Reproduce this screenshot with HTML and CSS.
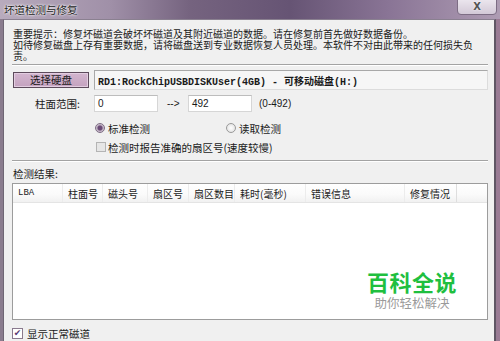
FILE: index.html
```html
<!DOCTYPE html>
<html lang="zh-CN">
<head>
  <meta charset="UTF-8" />
  <title>坏道检测与修复</title>
  <link rel="stylesheet" href="styles.css">
</head>
<body>
<div class="window">
  <div class="titlebar">
    <span class="title">坏道检测与修复</span>
    <span class="close">X</span>
  </div>
  <div class="client">
    <p class="notice">重要提示：修复坏磁道会破坏坏磁道及其附近磁道的数据。请在修复前首先做好数据备份。<br>如待修复磁盘上存有重要数据，请将磁盘送到专业数据恢复人员处理。本软件不对由此带来的任何损失负<br>责。</p>
    <div class="sep"></div>

    <div class="row disk-row">
      <button class="btn">选择硬盘</button>
      <div class="disk-field">RD1:RockChipUSBDISKUser(4GB) - 可移动磁盘(H:)</div>
    </div>

    <div class="row range-row">
      <span class="range-label">柱面范围:</span>
      <div class="input">0</div>
      <span class="arrow">--&gt;</span>
      <div class="input">492</div>
      <span class="hint">(0-492)</span>
    </div>

    <div class="row opt-row">
      <span class="opt opt-first"><span class="radio on"></span>标准检测</span>
      <span class="opt"><span class="radio"></span>读取检测</span>
    </div>

    <div class="row opt-row opt-check">
      <span class="opt"><span class="check disabled"></span>检测时报告准确的扇区号(速度较慢)</span>
    </div>

    <div class="sep sep-2"></div>

    <div class="row result-label">检测结果:</div>

    <div class="list">
      <div class="list-head">
        <span class="col c-lba">LBA</span>
        <span class="col c-cyl">柱面号</span>
        <span class="col c-head">磁头号</span>
        <span class="col c-sec">扇区号</span>
        <span class="col c-cnt">扇区数目</span>
        <span class="col c-time">耗时(毫秒)</span>
        <span class="col c-err">错误信息</span>
        <span class="col c-fix">修复情况</span>
      </div>
      <div class="watermark">
        <span class="wm-main">百科全说</span>
        <span class="wm-sub">助你轻松解决</span>
      </div>
    </div>

    <div class="row bottom-row">
      <span class="check on">&#10004;</span>显示正常磁道
    </div>
  </div>
</div>
</body>
</html>
```

FILE: styles.css
```css
/* Reset & frame */
* { margin: 0; padding: 0; box-sizing: border-box; }
html, body {
  width: 500px; height: 341px; overflow: hidden;
  background: linear-gradient(to right, #8a7c8e 0%, #8a7c8e 90%, #9a7b94 100%);
  font-family: "Noto Sans CJK SC", "Noto Sans", sans-serif;
  font-size: 10px; color: #1a1a1a;
}
.window { display: flex; flex-direction: column; height: 341px; }

/* Title bar */
.titlebar {
  height: 19px; display: flex; justify-content: space-between; align-items: center;
  padding-left: 4px;
  background: linear-gradient(to right, #b8abbd 0%, #a090a8 22%, #75637f 38%, #665474 58%, #8a7596 78%, #ae9cb3 100%);
}
.title {
  font-size: 10.5px; line-height: 12px; color: #222;
  text-shadow: 0 0 3px #fff, 0 0 2px #fff;
}
.close {
  align-self: flex-start; margin-top: -3px; margin-right: 3px;
  width: 40px; height: 18px; display: flex; align-items: center; justify-content: center;
  background: linear-gradient(#eee9f0, #d3c9d7);
  border: 1px solid #7d6d84; border-radius: 0 0 4px 4px;
  font-family: "DejaVu Sans", sans-serif; font-weight: 700; font-size: 10px; line-height: 11px; color: #555;
  text-shadow: 0 0 2px #fff;
}

/* Client area */
.client {
  position: relative;
  margin-left: 3px; width: 493px; height: 322px;
  border-left: 1px solid #6f6674; border-top: 1px solid #8a8090; border-right: 2px solid #5f5664;
  background: #f0f0f0;
  padding: 8px 6px 0 8px;
  overflow: hidden;
}
.notice { margin-left: 1px; line-height: 11px; white-space: nowrap; }
.sep { margin-top: 3px; border-top: 1px solid #a3a3a3; border-bottom: 1px solid #fff; }
.sep-2 { margin-top: 6px; }
.row { display: flex; align-items: center; white-space: nowrap; }

/* Disk selection */
.disk-row { margin-top: 4px; height: 20px; gap: 5px; }
.btn {
  margin-left: 1px; width: 76px; height: 16px;
  background: linear-gradient(#d3b6cf, #c4a2bf);
  border: 1px solid #5d4b5c; box-shadow: inset 0 0 0 1px #e2cde0;
  font-family: inherit; font-size: 10.5px; line-height: 14px; color: #1a1a1a;
}
.disk-field {
  width: 394px; height: 20px; padding-left: 3px;
  display: flex; align-items: center;
  background: #f6f6f6; border: 1px solid #a8a8a8; border-bottom-color: #dcdcdc; border-right-color: #dcdcdc;
  font-family: "Liberation Mono", "Noto Sans CJK SC", monospace; font-weight: 700; font-size: 10px;
}

/* Cylinder range */
.range-row { margin-top: 5px; height: 17px; }
.range-label { width: 82px; padding-right: 14px; text-align: right; font-size: 10.5px; }
.input {
  width: 64px; height: 17px; padding-left: 3px;
  display: flex; align-items: center;
  background: #fff; border: 1px solid #d6d6d6; border-top-color: #bdbdbd;
  font-family: "Liberation Sans", sans-serif; font-size: 10px;
}
.arrow { width: 30px; padding-left: 9px; font-family: "Liberation Sans", sans-serif; font-size: 10px; }
.hint { margin-left: 7px; font-family: "Liberation Sans", sans-serif; font-size: 10px; }

/* Options */
.opt-row { margin-top: 9px; height: 14px; padding-left: 83px; font-size: 10.5px; }
.opt-check { margin-top: 5px; padding-left: 84px; }
.opt { display: flex; align-items: center; gap: 3px; }
.opt-first { width: 131px; }
.opt-check .opt { gap: 2px; }
.radio {
  width: 10px; height: 10px; border-radius: 50%;
  border: 1px solid #9a9a9a; background: radial-gradient(#ffffff, #dcdcdc);
}
.radio.on { background: radial-gradient(circle, #6a4a76 0, #6a4a76 2px, #b8a8bc 3px, #e6e0e8 5px); border-color: #7d6d84; }
.check {
  width: 10px; height: 10px; border: 1px solid #b4b4b4;
  display: flex; align-items: center; justify-content: center;
}
.check.disabled { background: #e6e6e6; }
.check.on {
  width: 11px; height: 11px; background: #fff; border-color: #8a7a8e;
  color: #5a3a74; font-family: "DejaVu Sans", sans-serif; font-size: 9px; line-height: 9px;
}

/* Results */
.result-label { margin-top: 4px; height: 14px; margin-left: 1px; font-size: 10.5px; }
.list {
  position: relative;
  margin-top: 3px; height: 137px;
  background: #fff; border: 1px solid #9c9c9c;
}
.list-head {
  display: flex; height: 19px;
  background: linear-gradient(#ffffff, #fafafa 60%, #f1f1f1);
  border-bottom: 1px solid #e4e4e4;
}
.col {
  display: flex; align-items: center; padding-left: 5px; white-space: nowrap; overflow: hidden;
  border-right: 1px solid #ececec; font-size: 10px; color: #222;
}
.c-lba { width: 50px; font-family: "Liberation Mono", monospace; font-size: 9px; }
.c-cyl { width: 40px; }
.c-head { width: 45px; }
.c-sec { width: 41px; }
.c-cnt { width: 46px; }
.c-time { width: 71px; }
.c-err { width: 99px; }
.c-fix { width: 52px; border-right-color: #dedede; }

/* Watermark */
.watermark {
  position: absolute; right: 30px; top: 84px;
  display: flex; flex-direction: column; align-items: center;
}
.wm-main { font-size: 22px; line-height: 26px; font-weight: 700; color: #1fbf3f; letter-spacing: 0.5px; }
.wm-sub { margin-top: 2px; font-size: 12.5px; line-height: 14px; color: #9a9a9a; }

/* Bottom option */
.bottom-row { margin-top: 6px; height: 14px; gap: 4px; font-size: 10.5px; }
```
